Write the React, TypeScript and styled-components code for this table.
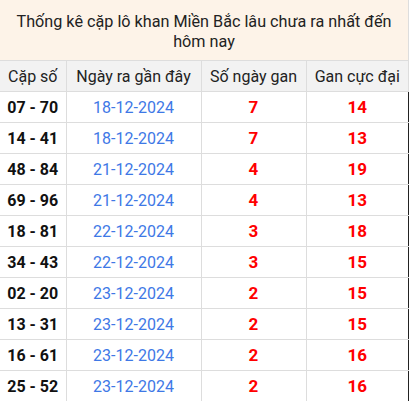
import React from 'react';
import styled, { createGlobalStyle } from 'styled-components';

const GlobalStyle = createGlobalStyle`
  body {
    margin: 0;
    background: #fff;
    font-family: Roboto, "Liberation Sans", sans-serif;
  }
`;

interface Row {
  pair: string;
  date: string;
  days: number;
  max: number;
}

const rows: Row[] = [
  { pair: '07 - 70', date: '18-12-2024', days: 7, max: 14 },
  { pair: '14 - 41', date: '18-12-2024', days: 7, max: 13 },
  { pair: '48 - 84', date: '21-12-2024', days: 4, max: 19 },
  { pair: '69 - 96', date: '21-12-2024', days: 4, max: 13 },
  { pair: '18 - 81', date: '22-12-2024', days: 3, max: 18 },
  { pair: '34 - 43', date: '22-12-2024', days: 3, max: 15 },
  { pair: '02 - 20', date: '23-12-2024', days: 2, max: 15 },
  { pair: '13 - 31', date: '23-12-2024', days: 2, max: 15 },
  { pair: '16 - 61', date: '23-12-2024', days: 2, max: 16 },
  { pair: '25 - 52', date: '23-12-2024', days: 2, max: 16 },
];

const App: React.FC = () => {
  return (
    <>
      <GlobalStyle />
      <Wrapper>
        <Title>Thống kê cặp lô khan Miền Bắc lâu chưa ra nhất đến hôm nay</Title>
        <Table>
          <colgroup>
            <col style={{ width: 66 }} />
            <col style={{ width: 135 }} />
            <col style={{ width: 105 }} />
            <col />
          </colgroup>
          <thead>
            <tr>
              <HeadCell>Cặp số</HeadCell>
              <HeadCell>Ngày ra gần đây</HeadCell>
              <HeadCell>Số ngày gan</HeadCell>
              <HeadCell>Gan cực đại</HeadCell>
            </tr>
          </thead>
          <tbody>
            {rows.map((r) => (
              <tr key={r.pair}>
                <Cell $kind="pair">{r.pair}</Cell>
                <Cell $kind="date">{r.date}</Cell>
                <Cell $kind="num">{r.days}</Cell>
                <Cell $kind="num">{r.max}</Cell>
              </tr>
            ))}
          </tbody>
        </Table>
      </Wrapper>
    </>
  );
};

const Wrapper = styled.div`
  width: 409px;
`;

const Title = styled.div`
  height: 61px;
  box-sizing: border-box;
  padding: 12px 4px 0;
  background: #fdf3e8;
  color: #222;
  font-size: 16.2px;
  line-height: 20px;
  text-align: center;
  border-right: 1px solid #ddd;
  border-bottom: 1px solid #ddd;
`;

const Table = styled.table`
  width: 100%;
  border-collapse: collapse;
  table-layout: fixed;
  border-right: 1px solid #222;
`;

const HeadCell = styled.th`
  height: 30px;
  padding: 0;
  background: #f2f2f2;
  color: #222;
  font-size: 16px;
  font-weight: 400;
  text-align: center;
  border: 1px solid #ddd;
  border-top: none;
  &:first-child { border-left: none; }
`;

const Cell = styled.td<{ $kind: 'pair' | 'date' | 'num' }>`
  height: 30px;
  padding: 0;
  text-align: center;
  border: 1px solid #ddd;
  &:first-child { border-left: none; }
  &:last-child { border-right: 1px solid #222; }
  font-size: ${(p) => (p.$kind === 'num' ? '17px' : '16px')};
  font-weight: ${(p) => (p.$kind === 'date' ? 400 : 700)};
  color: ${(p) => (p.$kind === 'pair' ? '#111' : p.$kind === 'date' ? '#3e78e6' : '#ff0000')};
`;

export default App;
